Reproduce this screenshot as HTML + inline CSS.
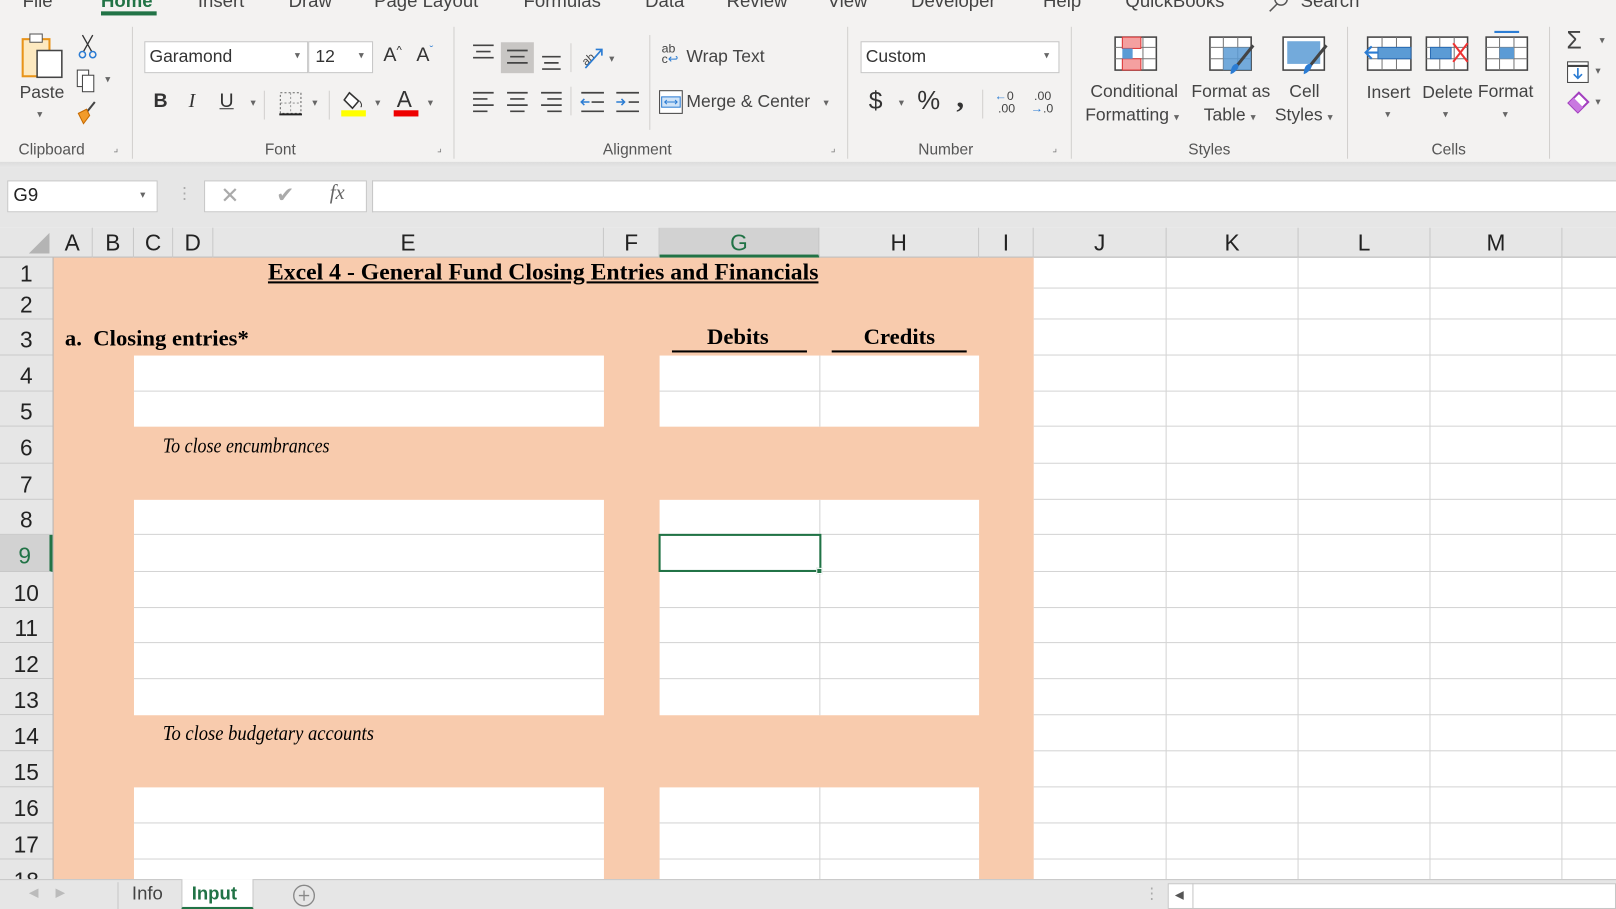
<!DOCTYPE html>
<html><head><meta charset="utf-8">
<style>
*{margin:0;padding:0;box-sizing:border-box}
html,body{width:1616px;height:909px;overflow:hidden;background:#fff}
#w{position:absolute;left:0;top:0;width:1568px;height:882px;transform:scale(1.030612);transform-origin:0 0;font-family:"Liberation Sans",sans-serif;color:#333;overflow:hidden}
.a{position:absolute}
.t{position:absolute;white-space:nowrap}
.rb{font-size:17px;color:#444}
.gl{font-size:15px;color:#555;top:137px}
.sep{position:absolute;width:1px;background:#d2d0ce;top:26px;height:128px}
.ch{position:absolute;top:221px;height:29px;border-right:1px solid #c8c8c8;font-size:22px;text-align:center;line-height:30px;color:#222}
.rh{position:absolute;left:0;width:51px;border-bottom:1px solid #c8c8c8;font-size:22px;text-align:center;color:#222;background:#e6e6e6}
.wc{position:absolute;background:#fff}
.hl{position:absolute;height:1px;background:#d4d4d4}
.vl{position:absolute;width:1px;background:#d4d4d4}
.serif{font-family:"Liberation Serif",serif;color:#000}
.dd{font-size:10px;color:#666}
</style></head><body><div id="w">
<!-- ribbon -->
<div class="a" style="left:0;top:0;width:1568px;height:157px;background:#f3f2f1"></div>
<div class="a" style="left:0;top:157px;width:1568px;height:6px;background:linear-gradient(#dcdcdc,#e8e8e8)"></div>
<div class="t rb" style="left:22px;top:-9px;font-size:18px">File</div>
<div class="t rb" style="left:98px;top:-9px;font-size:18px;color:#217346;font-weight:bold">Home</div>
<div class="a" style="left:98px;top:11px;width:54px;height:4px;background:#217346"></div>
<div class="t rb" style="left:192px;top:-9px;font-size:18px">Insert</div>
<div class="t rb" style="left:280px;top:-9px;font-size:18px">Draw</div>
<div class="t rb" style="left:363px;top:-9px;font-size:18px">Page Layout</div>
<div class="t rb" style="left:508px;top:-9px;font-size:18px">Formulas</div>
<div class="t rb" style="left:626px;top:-9px;font-size:18px">Data</div>
<div class="t rb" style="left:705px;top:-9px;font-size:18px">Review</div>
<div class="t rb" style="left:803px;top:-9px;font-size:18px">View</div>
<div class="t rb" style="left:884px;top:-9px;font-size:18px">Developer</div>
<div class="t rb" style="left:1012px;top:-9px;font-size:18px">Help</div>
<div class="t rb" style="left:1092px;top:-9px;font-size:18px">QuickBooks</div>
<div class="t rb" style="left:1262px;top:-9px;font-size:18px">Search</div>
<svg class="a" style="left:1230px;top:0" width="22" height="12"><circle cx="13" cy="-1" r="6" fill="none" stroke="#555" stroke-width="1.5"/><line x1="9" y1="4" x2="2" y2="11" stroke="#555" stroke-width="1.5"/></svg>

<!-- clipboard -->
<svg class="a" style="left:20px;top:30px" width="48" height="48"><rect x="2" y="8" width="26" height="36" fill="#fde9c0" stroke="#e8941a" stroke-width="2"/><rect x="9" y="3" width="12" height="8" fill="#fff" stroke="#555"/><rect x="16" y="19" width="24" height="26" fill="#fff" stroke="#444" stroke-width="1.5"/></svg>
<div class="t rb" style="left:19px;top:80px">Paste</div>
<div class="t dd" style="left:36px;top:106px">▾</div>
<svg class="a" style="left:74px;top:32px" width="22" height="26"><path d="M6 2 L15 18 M16 2 L7 18" stroke="#333" stroke-width="1.3" fill="none"/><circle cx="6" cy="21" r="3" fill="none" stroke="#2b7cd3" stroke-width="1.5"/><circle cx="16" cy="21" r="3" fill="none" stroke="#2b7cd3" stroke-width="1.5"/></svg>
<svg class="a" style="left:72px;top:66px" width="40" height="26"><rect x="3" y="2" width="11" height="16" fill="#fff" stroke="#444"/><rect x="8" y="7" width="11" height="16" fill="#fff" stroke="#444"/><text x="30" y="14" font-size="10" fill="#666">▾</text></svg>
<svg class="a" style="left:72px;top:96px" width="26" height="26"><path d="M20 3 L12 13" stroke="#444" stroke-width="2"/><path d="M4 14 L12 10 L15 16 L9 24 Z" fill="#f29b2a" stroke="#c66a00"/></svg>
<div class="t gl" style="left:18px">Clipboard</div>
<div class="t" style="left:110px;top:139px;font-size:10px;color:#777">⌟</div>
<div class="sep" style="left:128px"></div>

<!-- font -->
<div class="a" style="left:140px;top:40px;width:159px;height:31px;background:#fff;border:1px solid #c6c6c6"></div>
<div class="t" style="left:145px;top:45px;font-size:17px;color:#333">Garamond</div>
<div class="t dd" style="left:286px;top:49px">▾</div>
<div class="a" style="left:299px;top:40px;width:63px;height:31px;background:#fff;border:1px solid #c6c6c6"></div>
<div class="t" style="left:306px;top:45px;font-size:17px;color:#333">12</div>
<div class="t dd" style="left:348px;top:49px">▾</div>
<div class="t" style="left:372px;top:43px;font-size:19px;color:#333">A<span style="font-size:11px;vertical-align:top">^</span></div>
<div class="t" style="left:404px;top:43px;font-size:19px;color:#333">A<span style="font-size:11px;vertical-align:top;color:#2b7cd3">ˇ</span></div>
<div class="t" style="left:149px;top:88px;font-size:19px;font-weight:bold;color:#333">B</div>
<div class="t" style="left:183px;top:88px;font-size:19px;font-style:italic;color:#333;font-family:'Liberation Serif',serif">I</div>
<div class="t" style="left:213px;top:88px;font-size:19px;text-decoration:underline;color:#333">U</div>
<div class="t dd" style="left:243px;top:95px">▾</div>
<div class="a" style="left:256px;top:88px;width:1px;height:28px;background:#d2d0ce"></div>
<svg class="a" style="left:270px;top:88px" width="24" height="26"><rect x="2" y="2" width="20" height="20" fill="none" stroke="#666" stroke-dasharray="2 2"/><line x1="12" y1="2" x2="12" y2="22" stroke="#999" stroke-dasharray="2 2"/><line x1="2" y1="12" x2="22" y2="12" stroke="#999" stroke-dasharray="2 2"/><line x1="1" y1="23" x2="23" y2="23" stroke="#222" stroke-width="2"/></svg>
<div class="t dd" style="left:303px;top:95px">▾</div>
<div class="a" style="left:319px;top:88px;width:1px;height:28px;background:#d2d0ce"></div>
<svg class="a" style="left:331px;top:86px" width="26" height="28"><path d="M8 4 L17 12 L11 19 L3 11 Z" fill="#fff" stroke="#333" stroke-width="1.5"/><path d="M18 12 q3 4 1 6" stroke="#333" fill="none"/><rect x="0" y="21" width="24" height="6" fill="#ffff00"/></svg>
<div class="t dd" style="left:364px;top:95px">▾</div>
<div class="t" style="left:385px;top:84px;font-size:22px;color:#333">A</div>
<div class="a" style="left:382px;top:107px;width:24px;height:6px;background:#e00"></div>
<div class="t dd" style="left:415px;top:95px">▾</div>
<div class="t gl" style="left:257px">Font</div>
<div class="t" style="left:424px;top:139px;font-size:10px;color:#777">⌟</div>
<div class="sep" style="left:440px"></div>

<!-- alignment -->
<svg class="a" style="left:456px;top:38px" width="170" height="36">
<g stroke="#444" stroke-width="1.6"><line x1="3" y1="6" x2="23" y2="6"/><line x1="6" y1="12" x2="20" y2="12"/><line x1="3" y1="18" x2="23" y2="18"/></g>
<rect x="30" y="3" width="32" height="30" fill="#c8c6c4"/>
<g stroke="#444" stroke-width="1.6"><line x1="36" y1="11" x2="56" y2="11"/><line x1="39" y1="17" x2="53" y2="17"/><line x1="36" y1="23" x2="56" y2="23"/></g>
<g stroke="#444" stroke-width="1.6"><line x1="70" y1="17" x2="88" y2="17"/><line x1="72" y1="23" x2="86" y2="23"/><line x1="70" y1="29" x2="88" y2="29"/></g>
<line x1="98" y1="4" x2="98" y2="32" stroke="#d2d0ce"/>
<text x="108" y="22" font-size="11" fill="#444" transform="rotate(-40 116 18)">ab</text><path d="M112 28 L128 10 M122 10 h6 v6" stroke="#2b7cd3" stroke-width="1.6" fill="none"/><text x="135" y="22" font-size="10" fill="#666">▾</text>
</svg>
<svg class="a" style="left:456px;top:84px" width="170" height="30"><g stroke="#444" stroke-width="1.6">
<line x1="3" y1="6" x2="23" y2="6"/><line x1="3" y1="12" x2="17" y2="12"/><line x1="3" y1="18" x2="23" y2="18"/><line x1="3" y1="24" x2="17" y2="24"/>
<line x1="36" y1="6" x2="56" y2="6"/><line x1="39" y1="12" x2="53" y2="12"/><line x1="36" y1="18" x2="56" y2="18"/><line x1="39" y1="24" x2="53" y2="24"/>
<line x1="69" y1="6" x2="89" y2="6"/><line x1="75" y1="12" x2="89" y2="12"/><line x1="69" y1="18" x2="89" y2="18"/><line x1="75" y1="24" x2="89" y2="24"/>
<line x1="108" y1="6" x2="130" y2="6"/><line x1="118" y1="15" x2="130" y2="15"/><line x1="108" y1="24" x2="130" y2="24"/>
<line x1="142" y1="6" x2="164" y2="6"/><line x1="154" y1="15" x2="164" y2="15"/><line x1="142" y1="24" x2="164" y2="24"/></g>
<path d="M116 15 h-8 m3 -3 l-3 3 3 3" stroke="#2b7cd3" stroke-width="1.5" fill="none"/><path d="M142 15 h8 m-3 -3 l3 3 -3 3" stroke="#2b7cd3" stroke-width="1.5" fill="none"/>
<line x1="98" y1="0" x2="98" y2="28" stroke="#d2d0ce"/></svg>
<div class="a" style="left:630px;top:34px;width:1px;height:92px;background:#d2d0ce"></div>
<div class="t" style="left:642px;top:42px;font-size:12px;color:#444;line-height:10px">ab<br>c<span style="color:#2b7cd3">↩</span></div>
<div class="t rb" style="left:666px;top:45px">Wrap Text</div>
<svg class="a" style="left:639px;top:87px" width="24" height="24"><rect x="1" y="1" width="22" height="22" fill="#fff" stroke="#444"/><rect x="3" y="7" width="18" height="10" fill="#cfe3f7" stroke="#2b7cd3"/><path d="M6 12 h12 M8 10 l-2 2 2 2 M16 10 l2 2 -2 2" stroke="#2b7cd3" fill="none"/></svg>
<div class="t rb" style="left:666px;top:89px">Merge &amp; Center</div>
<div class="t dd" style="left:799px;top:95px">▾</div>
<div class="t gl" style="left:585px">Alignment</div>
<div class="t" style="left:806px;top:139px;font-size:10px;color:#777">⌟</div>
<div class="sep" style="left:822px"></div>

<!-- number -->
<div class="a" style="left:835px;top:40px;width:193px;height:31px;background:#fff;border:1px solid #c6c6c6"></div>
<div class="t" style="left:840px;top:45px;font-size:17px;color:#333">Custom</div>
<div class="t dd" style="left:1013px;top:49px">▾</div>
<div class="t" style="left:843px;top:85px;font-size:24px;color:#333">$</div>
<div class="t dd" style="left:872px;top:95px">▾</div>
<div class="t" style="left:890px;top:84px;font-size:25px;color:#333">%</div>
<div class="t" style="left:928px;top:78px;font-size:30px;color:#333;font-weight:bold;font-family:'Liberation Serif',serif">,</div>
<div class="a" style="left:953px;top:87px;width:1px;height:28px;background:#d2d0ce"></div>
<div class="t" style="left:965px;top:87px;font-size:12px;line-height:12px;color:#444"><span style="color:#2b7cd3">←</span>0<br>&nbsp;.00</div>
<div class="t" style="left:1000px;top:87px;font-size:12px;line-height:12px;color:#444">&nbsp;.00<br><span style="color:#2b7cd3">→</span>.0</div>
<div class="t gl" style="left:891px">Number</div>
<div class="t" style="left:1021px;top:139px;font-size:10px;color:#777">⌟</div>
<div class="sep" style="left:1039px"></div>

<!-- styles -->
<svg class="a" style="left:1080px;top:34px" width="44" height="36"><rect x="2" y="2" width="40" height="32" fill="#fff" stroke="#444" stroke-width="1.5"/><g stroke="#777"><line x1="2" y1="12" x2="42" y2="12"/><line x1="2" y1="23" x2="42" y2="23"/><line x1="15" y1="2" x2="15" y2="34"/><line x1="29" y1="2" x2="29" y2="34"/></g><rect x="9" y="2" width="18" height="11" fill="#f4a0a0" stroke="#d33"/><rect x="9" y="23" width="18" height="11" fill="#f4a0a0" stroke="#d33"/><rect x="9" y="13" width="10" height="10" fill="#5b9bd5"/></svg>
<div class="t rb" style="left:1058px;top:79px">Conditional</div>
<div class="t rb" style="left:1053px;top:102px">Formatting <span class="dd">▾</span></div>
<svg class="a" style="left:1172px;top:34px" width="48" height="42"><rect x="2" y="2" width="40" height="32" fill="#fff" stroke="#444" stroke-width="1.5"/><g stroke="#777"><line x1="2" y1="12" x2="42" y2="12"/><line x1="2" y1="23" x2="42" y2="23"/><line x1="15" y1="2" x2="15" y2="34"/><line x1="29" y1="2" x2="29" y2="34"/></g><rect x="15" y="12" width="27" height="22" fill="#5b9bd5" opacity=".85"/><path d="M44 10 L28 30" stroke="#444" stroke-width="3"/><path d="M24 30 q4 -4 6 0 q-2 6 -8 8 q0 -5 2 -8z" fill="#2b7cd3"/></svg>
<div class="t rb" style="left:1156px;top:79px">Format as</div>
<div class="t rb" style="left:1168px;top:102px">Table <span class="dd">▾</span></div>
<svg class="a" style="left:1243px;top:34px" width="48" height="42"><rect x="2" y="2" width="40" height="32" fill="#fff" stroke="#444" stroke-width="1.5"/><rect x="6" y="6" width="32" height="22" fill="#5b9bd5" opacity=".85"/><path d="M44 10 L28 30" stroke="#444" stroke-width="3"/><path d="M24 30 q4 -4 6 0 q-2 6 -8 8 q0 -5 2 -8z" fill="#2b7cd3"/></svg>
<div class="t rb" style="left:1251px;top:79px">Cell</div>
<div class="t rb" style="left:1237px;top:102px">Styles <span class="dd">▾</span></div>
<div class="t gl" style="left:1153px">Styles</div>
<div class="sep" style="left:1307px"></div>

<!-- cells -->
<svg class="a" style="left:1323px;top:34px" width="50" height="36"><rect x="4" y="2" width="42" height="32" fill="#fff" stroke="#444" stroke-width="1.5"/><g stroke="#777"><line x1="4" y1="12" x2="46" y2="12"/><line x1="4" y1="23" x2="46" y2="23"/><line x1="18" y1="2" x2="18" y2="34"/><line x1="32" y1="2" x2="32" y2="34"/></g><rect x="14" y="12" width="32" height="11" fill="#5b9bd5" stroke="#2b6cb3"/><path d="M14 17 h-12 m6 -6 l-6 6 6 6" stroke="#2b7cd3" stroke-width="2" fill="none"/></svg>
<div class="t rb" style="left:1326px;top:80px">Insert</div>
<div class="t dd" style="left:1344px;top:106px">▾</div>
<svg class="a" style="left:1382px;top:34px" width="46" height="36"><rect x="2" y="2" width="40" height="32" fill="#fff" stroke="#444" stroke-width="1.5"/><g stroke="#777"><line x1="2" y1="12" x2="42" y2="12"/><line x1="2" y1="23" x2="42" y2="23"/><line x1="15" y1="2" x2="15" y2="34"/><line x1="29" y1="2" x2="29" y2="34"/></g><rect x="6" y="12" width="20" height="11" fill="#5b9bd5" stroke="#2b6cb3"/><path d="M28 8 L42 26 M42 8 L28 26" stroke="#e33" stroke-width="2"/></svg>
<div class="t rb" style="left:1380px;top:80px">Delete</div>
<div class="t dd" style="left:1400px;top:106px">▾</div>
<svg class="a" style="left:1440px;top:28px" width="44" height="42"><line x1="10" y1="3" x2="34" y2="3" stroke="#2b7cd3" stroke-width="2"/><rect x="2" y="8" width="40" height="32" fill="#fff" stroke="#444" stroke-width="1.5"/><g stroke="#777"><line x1="2" y1="18" x2="42" y2="18"/><line x1="2" y1="29" x2="42" y2="29"/><line x1="15" y1="8" x2="15" y2="40"/><line x1="29" y1="8" x2="29" y2="40"/></g><rect x="15" y="18" width="14" height="11" fill="#5b9bd5"/></svg>
<div class="t rb" style="left:1434px;top:79px">Format</div>
<div class="t dd" style="left:1458px;top:106px">▾</div>
<div class="t gl" style="left:1389px">Cells</div>
<div class="sep" style="left:1503px"></div>
<div class="t" style="left:1520px;top:26px;font-size:24px;color:#444">Σ</div><div class="t dd" style="left:1552px;top:34px">▾</div>
<svg class="a" style="left:1519px;top:58px" width="26" height="24"><rect x="2" y="2" width="20" height="20" fill="#fff" stroke="#444"/><line x1="2" y1="6" x2="22" y2="6" stroke="#444" stroke-width="2"/><path d="M12 8 v10 m-4 -4 l4 4 4 -4" stroke="#2b7cd3" stroke-width="1.6" fill="none"/></svg><div class="t dd" style="left:1548px;top:64px">▾</div>
<svg class="a" style="left:1519px;top:88px" width="26" height="24"><path d="M3 12 L13 2 L22 11 L12 21 Z" fill="#fff" stroke="#a33fbf" stroke-width="2"/><path d="M3 12 L8 7 L17 16 L12 21 Z" fill="#c978e0"/></svg><div class="t dd" style="left:1548px;top:94px">▾</div>

<!-- formula bar -->
<div class="a" style="left:0;top:163px;width:1568px;height:58px;background:#e6e6e6"></div>
<div class="a" style="left:7px;top:175px;width:146px;height:31px;background:#fff;border:1px solid #c6c6c6"></div>
<div class="t" style="left:13px;top:179px;font-size:18px;color:#222">G9</div>
<div class="t dd" style="left:136px;top:184px">▾</div>
<div class="t" style="left:171px;top:178px;font-size:16px;color:#aaa">⋮</div>
<div class="a" style="left:198px;top:175px;width:158px;height:31px;background:#fff;border:1px solid #c6c6c6"></div>
<div class="t" style="left:214px;top:177px;font-size:22px;color:#aaa">✕</div>
<div class="t" style="left:268px;top:177px;font-size:21px;color:#aaa">✔</div>
<div class="t" style="left:320px;top:176px;font-size:20px;color:#666;font-style:italic;font-family:'Liberation Serif',serif">fx</div>
<div class="a" style="left:361px;top:175px;width:1207px;height:31px;background:#fff;border:1px solid #c6c6c6;border-right:none"></div>

<!-- column headers -->
<div class="a" style="left:0;top:221px;width:1568px;height:29px;background:#e6e6e6;border-bottom:1px solid #b5b5b5"></div>
<svg class="a" style="left:28px;top:226px" width="22" height="22"><path d="M20 0 V20 H0 Z" fill="#b4b4b4"/></svg>
<div class="ch" style="left:51px;width:39px">A</div>
<div class="ch" style="left:90px;width:40px">B</div>
<div class="ch" style="left:130px;width:38px">C</div>
<div class="ch" style="left:168px;width:39px">D</div>
<div class="ch" style="left:207px;width:379px">E</div>
<div class="ch" style="left:586px;width:54px">F</div>
<div class="ch" style="left:640px;width:155px;background:#d2d2d2;color:#217346;border-bottom:3px solid #217346">G</div>
<div class="ch" style="left:795px;width:155px">H</div>
<div class="ch" style="left:950px;width:53px">I</div>
<div class="ch" style="left:1003px;width:129px">J</div>
<div class="ch" style="left:1132px;width:128px">K</div>
<div class="ch" style="left:1260px;width:128px">L</div>
<div class="ch" style="left:1388px;width:128px">M</div>

<!-- grid area -->
<div class="a" style="left:51px;top:250px;width:952px;height:603px;background:#f8cbad"></div>
<div class="vl" style="left:1131px;top:250px;height:603px"></div>
<div class="vl" style="left:1259px;top:250px;height:603px"></div>
<div class="vl" style="left:1387px;top:250px;height:603px"></div>
<div class="vl" style="left:1515px;top:250px;height:603px"></div>

<!-- row headers -->
<div class="rh" style="top:250px;height:30px;line-height:32px">1</div>
<div class="rh" style="top:280px;height:30px;line-height:32px">2</div>
<div class="rh" style="top:310px;height:35px;line-height:40px">3</div>
<div class="rh" style="top:345px;height:35px;line-height:40px">4</div>
<div class="rh" style="top:380px;height:34px;line-height:40px">5</div>
<div class="rh" style="top:414px;height:36px;line-height:42px">6</div>
<div class="rh" style="top:450px;height:35px;line-height:42px">7</div>
<div class="rh" style="top:485px;height:34px;line-height:40px">8</div>
<div class="rh" style="top:519px;height:36px;line-height:42px;background:#d2d2d2;color:#217346;border-right:3px solid #217346">9</div>
<div class="rh" style="top:555px;height:35px;line-height:42px">10</div>
<div class="rh" style="top:590px;height:34px;line-height:40px">11</div>
<div class="rh" style="top:624px;height:35px;line-height:42px">12</div>
<div class="rh" style="top:659px;height:35px;line-height:42px">13</div>
<div class="rh" style="top:694px;height:35px;line-height:42px">14</div>
<div class="rh" style="top:729px;height:35px;line-height:42px">15</div>
<div class="rh" style="top:764px;height:35px;line-height:42px">16</div>
<div class="rh" style="top:799px;height:35px;line-height:42px">17</div>
<div class="rh" style="top:834px;height:35px;line-height:42px">18</div>
<div class="a" style="left:51px;top:250px;width:1px;height:603px;background:#b5b5b5"></div>

<div class="hl" style="left:1003px;top:279px;width:565px"></div>
<div class="hl" style="left:1003px;top:309px;width:565px"></div>
<div class="hl" style="left:1003px;top:344px;width:565px"></div>
<div class="hl" style="left:1003px;top:379px;width:565px"></div>
<div class="hl" style="left:1003px;top:413px;width:565px"></div>
<div class="hl" style="left:1003px;top:449px;width:565px"></div>
<div class="hl" style="left:1003px;top:484px;width:565px"></div>
<div class="hl" style="left:1003px;top:518px;width:565px"></div>
<div class="hl" style="left:1003px;top:554px;width:565px"></div>
<div class="hl" style="left:1003px;top:589px;width:565px"></div>
<div class="hl" style="left:1003px;top:623px;width:565px"></div>
<div class="hl" style="left:1003px;top:658px;width:565px"></div>
<div class="hl" style="left:1003px;top:693px;width:565px"></div>
<div class="hl" style="left:1003px;top:728px;width:565px"></div>
<div class="hl" style="left:1003px;top:763px;width:565px"></div>
<div class="hl" style="left:1003px;top:798px;width:565px"></div>
<div class="hl" style="left:1003px;top:833px;width:565px"></div>

<div class="wc" style="left:130px;top:345px;width:456px;height:69px"></div>
<div class="wc" style="left:640px;top:345px;width:310px;height:69px"></div>
<div class="wc" style="left:130px;top:485px;width:456px;height:209px"></div>
<div class="wc" style="left:640px;top:485px;width:310px;height:209px"></div>
<div class="wc" style="left:130px;top:764px;width:456px;height:89px"></div>
<div class="wc" style="left:640px;top:764px;width:310px;height:89px"></div>
<div class="vl" style="left:795px;top:345px;height:69px"></div>
<div class="vl" style="left:795px;top:485px;height:209px"></div>
<div class="vl" style="left:795px;top:764px;height:89px"></div>
<div class="hl" style="left:130px;top:379px;width:456px"></div><div class="hl" style="left:640px;top:379px;width:310px"></div>
<div class="hl" style="left:130px;top:518px;width:456px"></div><div class="hl" style="left:640px;top:518px;width:310px"></div>
<div class="hl" style="left:130px;top:554px;width:456px"></div><div class="hl" style="left:640px;top:554px;width:310px"></div>
<div class="hl" style="left:130px;top:589px;width:456px"></div><div class="hl" style="left:640px;top:589px;width:310px"></div>
<div class="hl" style="left:130px;top:623px;width:456px"></div><div class="hl" style="left:640px;top:623px;width:310px"></div>
<div class="hl" style="left:130px;top:658px;width:456px"></div><div class="hl" style="left:640px;top:658px;width:310px"></div>
<div class="hl" style="left:130px;top:798px;width:456px"></div><div class="hl" style="left:640px;top:798px;width:310px"></div>
<div class="hl" style="left:130px;top:833px;width:456px"></div><div class="hl" style="left:640px;top:833px;width:310px"></div>

<!-- text -->
<div class="t serif" style="left:260px;top:251px;font-size:23px;font-weight:bold;text-decoration:underline">Excel 4 - General Fund Closing Entries and Financials</div>
<div class="t serif" style="left:63px;top:315px;font-size:22px;font-weight:bold">a.&nbsp; Closing entries*</div>
<div class="t serif" style="left:686px;top:314px;font-size:22px;font-weight:bold">Debits</div>
<div class="t serif" style="left:838px;top:314px;font-size:22px;font-weight:bold">Credits</div>
<div class="a" style="left:652px;top:340px;width:131px;height:2px;background:#000"></div>
<div class="a" style="left:807px;top:340px;width:131px;height:2px;background:#000"></div>
<div class="t serif" style="left:158px;top:422px;font-size:20px;font-style:italic;transform:scaleX(0.87);transform-origin:0 0">To close encumbrances</div>
<div class="t serif" style="left:158px;top:701px;font-size:20px;font-style:italic;transform:scaleX(0.9);transform-origin:0 0">To close budgetary accounts</div>

<!-- selection -->
<div class="a" style="left:639px;top:518px;width:158px;height:37px;border:2px solid #217346"></div>
<div class="a" style="left:792px;top:551px;width:6px;height:6px;background:#217346;border:1px solid #fff"></div>

<!-- sheet tabs -->
<div class="a" style="left:0;top:853px;width:1568px;height:29px;background:#e6e6e6;border-top:1px solid #c6c6c6"></div>
<div class="t" style="left:28px;top:859px;font-size:12px;color:#bbb">◀&nbsp;&nbsp;&nbsp;&nbsp;&nbsp;▶</div>
<div class="a" style="left:114px;top:856px;width:1px;height:26px;background:#c6c6c6"></div>
<div class="t" style="left:128px;top:857px;font-size:18px;color:#444">Info</div>
<div class="a" style="left:176px;top:853px;width:70px;height:29px;background:#fff;border-bottom:2px solid #217346;border-left:1px solid #c6c6c6;border-right:1px solid #c6c6c6"></div>
<div class="t" style="left:186px;top:857px;font-size:18px;font-weight:bold;color:#217346">Input</div>
<svg class="a" style="left:283px;top:857px" width="24" height="24"><circle cx="12" cy="12" r="10" fill="none" stroke="#888" stroke-width="1.3"/><path d="M12 7 v10 M7 12 h10" stroke="#888" stroke-width="1.3"/></svg>
<div class="t" style="left:1110px;top:858px;font-size:15px;color:#aaa">⋮</div>
<div class="a" style="left:1133px;top:857px;width:435px;height:25px;background:#fff;border:1px solid #c6c6c6"></div>
<div class="a" style="left:1157px;top:857px;width:1px;height:25px;background:#c6c6c6"></div>
<div class="t" style="left:1140px;top:862px;font-size:11px;color:#555">◀</div>
</div></body></html>
